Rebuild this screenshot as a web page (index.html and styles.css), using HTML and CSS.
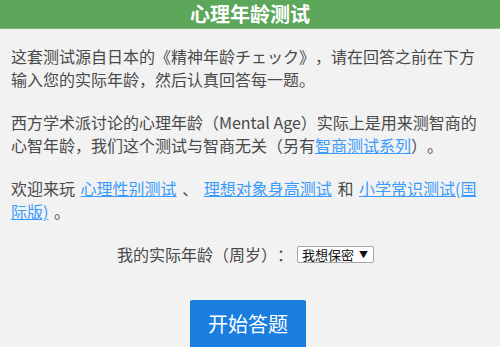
FILE: index.html
```html
<!DOCTYPE html>
<html lang="zh-CN">
<head>
  <meta charset="UTF-8">
  <title>心理年龄测试</title>
  <link rel="stylesheet" href="styles.css">
</head>
<body>
  <header class="topbar">
    <h1>心理年龄测试</h1>
  </header>

  <div class="content">
    <p class="intro">这套测试源自日本的《精神年龄チェック》，请在回答之前在下方输入您的实际年龄，然后认真回答每一题。</p>
    <p class="intro">西方学术派讨论的心理年龄（Mental Age）实际上是用来测智商的心智年龄，我们这个测试与智商无关（另有<a href="#">智商测试系列</a>）。</p>
    <p class="intro welcome">欢迎来玩 <a href="#">心理性别测试</a> 、 <a href="#">理想对象身高测试</a> 和 <a href="#">小学常识测试(国际版)</a> 。</p>

    <form class="age-form">
      <div class="age-row">
        <label for="age">我的实际年龄（周岁）：</label>
        <span class="age-select" id="age">我想保密 <span class="arrow">▼</span></span>
      </div>
      <div class="actions">
        <button type="button" class="start-btn">开始答题</button>
      </div>
    </form>
  </div>
</body>
</html>
```

FILE: styles.css
```css
* {
  box-sizing: border-box;
}

body {
  margin: 0;
  padding: 0;
  background: #f2f2f2;
  font-family: 'Noto Sans CJK SC', 'Noto Sans', sans-serif;
  color: #4a4a4a;
  text-spacing-trim: space-all;
  overflow: hidden;
}

.topbar {
  background: #5ca75a;
  height: 29px;
  border-bottom: 1px solid #7dba7b;
}

.topbar h1 {
  margin: 0;
  font-size: 20px;
  line-height: 27px;
  font-weight: bold;
  color: #fff;
  text-align: center;
}

.content {
  padding: 16px 17px 0 11px;
}

.intro {
  margin: 0 0 20px;
  font-size: 16px;
  line-height: 23px;
}

.intro + .intro {
  margin-top: 1px;
}

.welcome {
  word-spacing: 2px;
}

.intro a {
  color: #3a9bff;
  text-decoration: underline;
}

.age-row {
  display: flex;
  justify-content: center;
  align-items: center;
  gap: 4px;
  padding-right: 3px;
  font-size: 16px;
  line-height: 23px;
}

.age-select {
  display: inline-flex;
  align-items: center;
  height: 17px;
  padding: 0 5px 0 4px;
  background: #fff;
  border: 1px solid #a6a6a6;
  border-radius: 2px;
  font-size: 13px;
  line-height: 15px;
  color: #111;
}

.arrow {
  font-size: 9px;
  margin-left: 5px;
}

.actions {
  margin-top: 34px;
  text-align: center;
  padding-left: 2px;
}

.start-btn {
  width: 116px;
  height: 56px;
  padding: 0 0 10px;
  background: #1a7de0;
  border: none;
  border-radius: 2px;
  font-family: inherit;
  font-size: 20px;
  color: #fff;
}
```
